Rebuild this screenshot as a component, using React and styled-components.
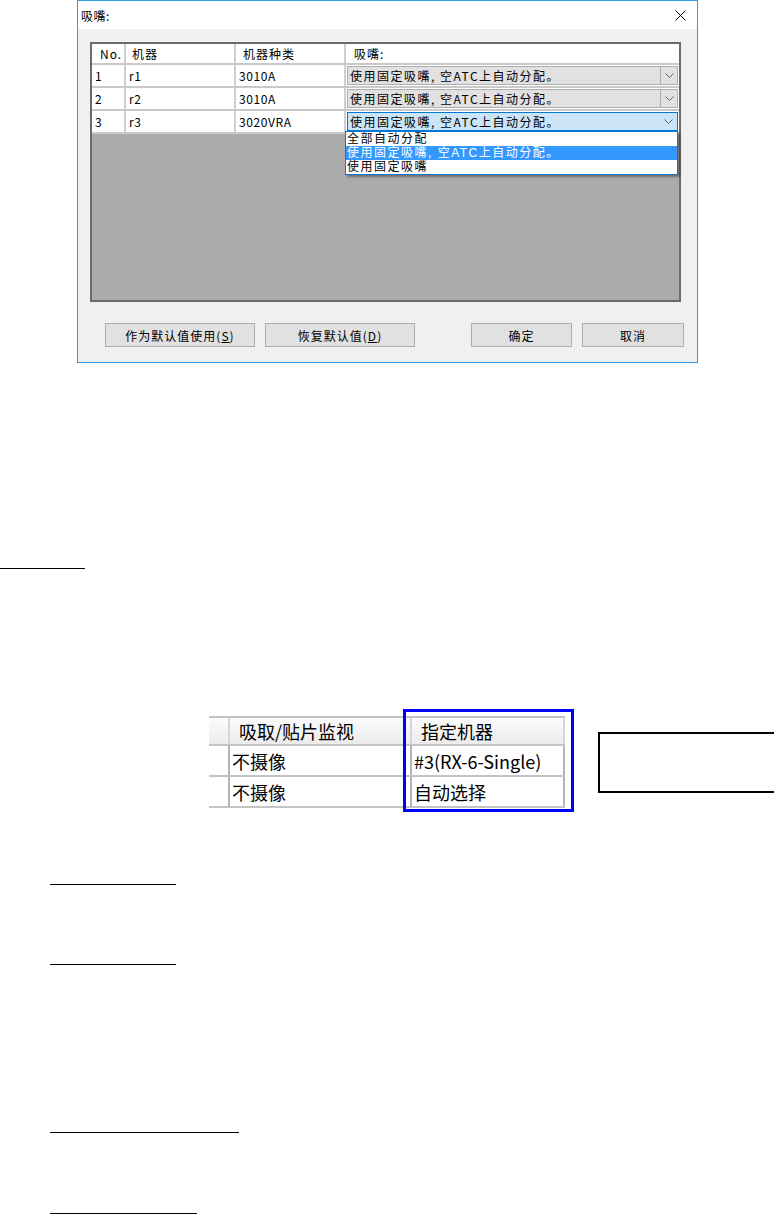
import styled, { createGlobalStyle } from "styled-components";

const GlobalStyle = createGlobalStyle`
    html, body {
        margin: 0;
        padding: 0;
        background: #ffffff;
        overflow-x: hidden;
    }
    body {
        font-family: "Noto Sans CJK SC", "Liberation Sans", sans-serif;
        color: #000;
    }
`

const Page = styled.div`
    display: flex;
    flex-direction: column;
    width: 774px;
`

/* ---------- dialog ---------- */

const Dialog = styled.div`
    margin-left: 77px;
    width: 621px;
    box-sizing: border-box;
    border: 1px solid #2f9ae8;
    background: #f0f0f0;
    display: flex;
    flex-direction: column;
`

const TitleBar = styled.div`
    height: 28px;
    background: #fff;
    display: flex;
    align-items: center;
    justify-content: space-between;
    padding-left: 3px;
    font-size: 12px;
    letter-spacing: 0.5px;
`

const CloseButton = styled.div`
    width: 34px;
    height: 28px;
    display: flex;
    align-items: center;
    justify-content: center;
`

const DialogBody = styled.div`
    padding: 13px 16px 15px 12px;
    display: flex;
    flex-direction: column;
`

const Grid = styled.div`
    position: relative;
    height: 260px;
    box-sizing: border-box;
    border: 2px solid #6b6b6b;
    background: #ababab;
    display: flex;
    flex-direction: column;
`

const GridRow = styled.div`
    display: grid;
    grid-template-columns: 34px 110px 110px 1fr;
    height: ${props => props.header ? 21 : 23}px;
    box-sizing: border-box;
    border-bottom: 2px solid #c9c9c9;
    background: #fff;
    font-size: 12px;
`

const GridCell = styled.div`
    box-sizing: border-box;
    border-right: ${props => props.last ? 'none' : '2px solid #cfcfcf'};
    display: flex;
    align-items: center;
    padding-left: ${props => props.header ? (props.pad || 7) : 3}px;
    letter-spacing: ${props => props.header ? '1px' : '0.6px'};
    white-space: nowrap;
    overflow: ${props => props.last ? 'visible' : 'hidden'};
    position: relative;
`

const Combo = styled.div`
    flex: 1;
    align-self: stretch;
    margin: 1px 1px 1px -2px;
    box-sizing: border-box;
    border: 1px solid ${props => props.active ? '#0078d7' : '#adadad'};
    background: ${props => props.active ? '#cce4f7' : '#e1e1e1'};
    display: flex;
    align-items: center;
`

const ComboText = styled.span`
    flex: 1;
    padding-left: 2px;
    letter-spacing: 1.5px;
`

const ComboArrow = styled.div`
    width: 17px;
    align-self: stretch;
    box-sizing: border-box;
    border-left: ${props => props.active ? 'none' : '1px solid #adadad'};
    display: flex;
    align-items: center;
    justify-content: center;
`

const DropList = styled.div`
    position: absolute;
    top: 20px;
    left: -1px;
    right: 1px;
    z-index: 2;
    background: #fff;
    border: 1px solid #0078d7;
    box-shadow: 2px 2px 2px rgba(0, 0, 0, 0.35);
    font-family: "Liberation Sans", "Noto Sans CJK SC", sans-serif;
    font-size: 12px;
    letter-spacing: 1.5px;
`

const DropItem = styled.div`
    height: 14px;
    line-height: 14px;
    padding-left: 1px;
    background: ${props => props.selected ? '#3399ff' : '#fff'};
    color: ${props => props.selected ? '#fff' : '#000'};
`

const ButtonRow = styled.div`
    margin: 21px -3px 0 15px;
    display: flex;
    justify-content: space-between;
`

const ButtonGroup = styled.div`
    display: flex;
    gap: 10px;
`

const Button = styled.div`
    width: ${props => props.w}px;
    height: 24px;
    box-sizing: border-box;
    border: 1px solid #adadad;
    background: #e1e1e1;
    display: flex;
    align-items: center;
    justify-content: center;
    font-size: 12px;
    letter-spacing: 1px;
    u {
        text-underline-offset: 1px;
    }
`

const Chevron = () => (
    <svg width="9" height="6" viewBox="0 0 9 6">
        <path d="M0.5 0.5 L4.5 4.5 L8.5 0.5" fill="none" stroke="#606060" strokeWidth="1"/>
    </svg>
)

const CloseIcon = () => (
    <svg width="11" height="11" viewBox="0 0 11 11">
        <path d="M0.5 0.5 L10.5 10.5 M10.5 0.5 L0.5 10.5" stroke="#000" strokeWidth="1"/>
    </svg>
)

const nozzle = '使用固定吸嘴, 空ATC上自动分配。'

const rows = [
    {no: '1', name: 'r1', type: '3010A'},
    {no: '2', name: 'r2', type: '3010A'},
    {no: '3', name: 'r3', type: '3020VRA', open: true},
]

const NozzleDialog = () => (
    <Dialog>
        <TitleBar>
            <span>吸嘴:</span>
            <CloseButton><CloseIcon/></CloseButton>
        </TitleBar>
        <DialogBody>
            <Grid>
                <GridRow header>
                    <GridCell header pad={8}>No.</GridCell>
                    <GridCell header pad={6}>机器</GridCell>
                    <GridCell header>机器种类</GridCell>
                    <GridCell header pad={8} last>吸嘴:</GridCell>
                </GridRow>
                {rows.map(r => (
                    <GridRow key={r.no}>
                        <GridCell>{r.no}</GridCell>
                        <GridCell>{r.name}</GridCell>
                        <GridCell>{r.type}</GridCell>
                        <GridCell last>
                            <Combo active={r.open}>
                                <ComboText>{nozzle}</ComboText>
                                <ComboArrow active={r.open}><Chevron/></ComboArrow>
                            </Combo>
                            {r.open && (
                                <DropList>
                                    <DropItem>全部自动分配</DropItem>
                                    <DropItem selected>{nozzle}</DropItem>
                                    <DropItem>使用固定吸嘴</DropItem>
                                </DropList>
                            )}
                        </GridCell>
                    </GridRow>
                ))}
            </Grid>
            <ButtonRow>
                <ButtonGroup>
                    <Button w={150}>作为默认值使用(<u>S</u>)</Button>
                    <Button w={150}>恢复默认值(<u>D</u>)</Button>
                </ButtonGroup>
                <ButtonGroup>
                    <Button w={101}>确定</Button>
                    <Button w={102}>取消</Button>
                </ButtonGroup>
            </ButtonRow>
        </DialogBody>
    </Dialog>
)

/* ---------- lower figure ---------- */

const Rule = styled.div`
    margin-top: ${props => props.top}px;
    margin-left: ${props => props.left || 0}px;
    width: ${props => props.w}px;
    border-top: ${props => props.thick || 1}px solid #000;
`

const Figure = styled.div`
    margin-top: ${props => props.top}px;
    padding-left: 209px;
    display: flex;
    align-items: flex-start;
`

const MonitorTable = styled.div`
    position: relative;
    width: 356px;
    border-top: 2px solid #c4c4c4;
    font-size: 18px;
`

const MonitorRow = styled.div`
    display: grid;
    grid-template-columns: 21px 182px 153px;
    height: ${props => props.header ? 28 : 31}px;
    box-sizing: border-box;
    border-bottom: 2px solid #c4c4c4;
    background: ${props => props.header ? 'linear-gradient(#fbfbfb, #ececec)' : '#fff'};
`

const MonitorCell = styled.div`
    box-sizing: border-box;
    border-right: 2px solid ${props => props.header ? '#d6d6d6' : '#b4b4b4'};
    display: flex;
    align-items: center;
    padding-left: ${props => props.header ? 9 : 2}px;
    white-space: nowrap;
`

const Highlight = styled.div`
    position: absolute;
    top: -9px;
    left: 194px;
    width: 171px;
    height: 103px;
    box-sizing: border-box;
    border: 3px solid #0000ff;
`

const NoteBox = styled.div`
    margin: 16px 0 0 33px;
    width: 176px;
    height: 61px;
    flex-shrink: 0;
    box-sizing: border-box;
    border: 2px solid #000;
    border-right: none;
`

const App = () => (
    <Page>
        <GlobalStyle/>
        <NozzleDialog/>
        <Rule top={205} w={85}/>
        <Figure top={147}>
            <MonitorTable>
                <MonitorRow header>
                    <MonitorCell header/>
                    <MonitorCell header>吸取/贴片监视</MonitorCell>
                    <MonitorCell header>指定机器</MonitorCell>
                </MonitorRow>
                <MonitorRow>
                    <MonitorCell/>
                    <MonitorCell>不摄像</MonitorCell>
                    <MonitorCell>#3(RX-6-Single)</MonitorCell>
                </MonitorRow>
                <MonitorRow>
                    <MonitorCell/>
                    <MonitorCell>不摄像</MonitorCell>
                    <MonitorCell>自动选择</MonitorCell>
                </MonitorRow>
                <Highlight/>
            </MonitorTable>
            <NoteBox/>
        </Figure>
        <Rule top={76} left={50} w={126}/>
        <Rule top={79} left={50} w={126}/>
        <Rule top={167} left={50} w={189}/>
        <Rule top={80} left={50} w={147} thick={2}/>
    </Page>
)

export default App
